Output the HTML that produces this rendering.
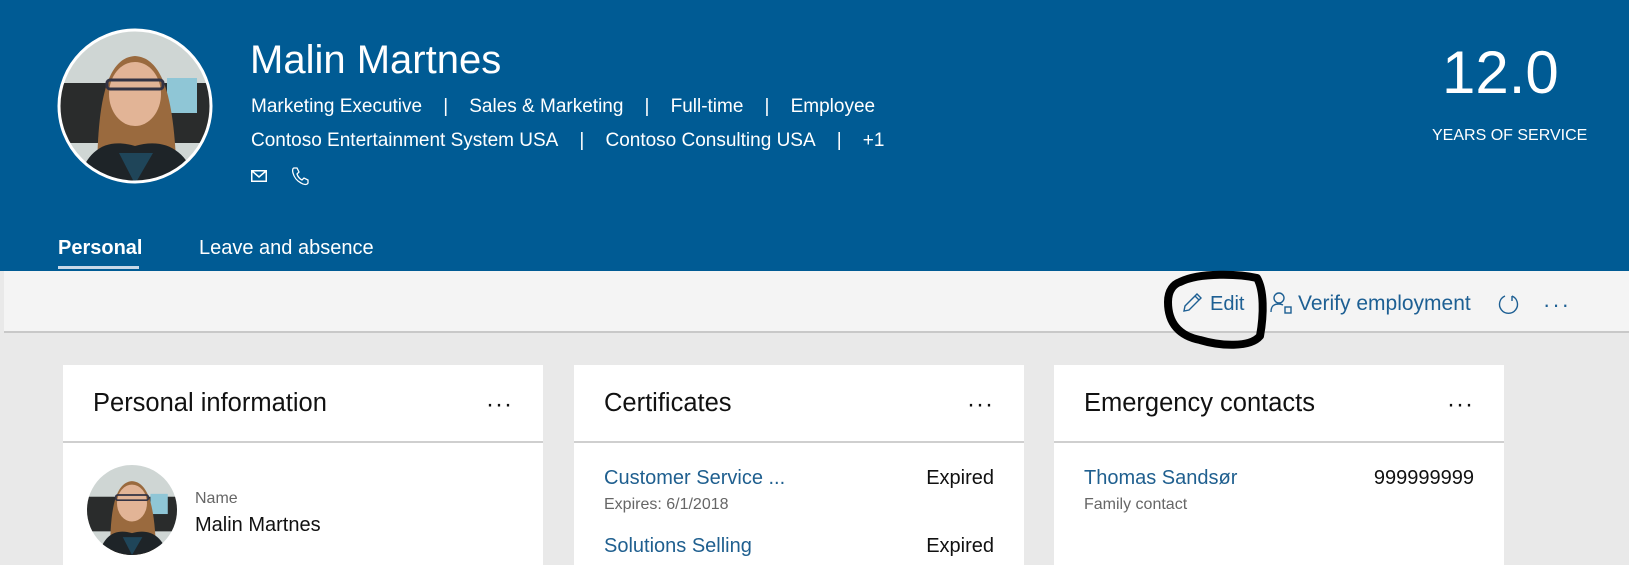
<!DOCTYPE html>
<html><head><meta charset="utf-8"><style>
*{margin:0;padding:0;box-sizing:border-box}
body{width:1629px;height:553px;overflow:hidden;background:#e9e9e9;font-family:"Segoe UI","Liberation Sans",sans-serif;position:relative}
.abs{position:absolute;white-space:nowrap}
.hdr{position:absolute;left:0;top:0;width:1629px;height:271px;background:#005b94;color:#fff}
.tb{position:absolute;left:4px;top:271px;width:1625px;height:62px;background:#f4f4f4;border-bottom:2px solid #c8c8c8}
.card{position:absolute;top:365px;height:200px;background:#fff}
.card .t{position:absolute;left:30px;top:24px;font-size:25.5px;color:#111}
.card .d{position:absolute;right:30px;top:26px;font-size:24px;color:#111;letter-spacing:1px}
.card .ln{position:absolute;left:0;right:0;top:76px;height:2px;background:#cfcfcf}
.lk{color:#1f5f8f;font-size:20px}
.sec{color:#666;font-size:16px}
.blue{color:#1d5f93}
</style></head><body>
<div class="hdr">
  <svg class="abs" style="left:57px;top:28px" width="156" height="156" viewBox="0 0 156 156">
    <defs><clipPath id="c1"><circle cx="78" cy="78" r="75"/></clipPath></defs>
    <g clip-path="url(#c1)">
      <rect width="156" height="156" fill="#cfd6d4"/>
      <rect y="55" width="156" height="60" fill="#2a2c2c"/>
      <rect x="110" y="50" width="30" height="35" fill="#8fc6d6"/>
      <path d="M40 156 C40 90 45 30 78 28 C112 30 118 90 120 156Z" fill="#9a6a3e"/>
      <ellipse cx="78" cy="66" rx="26" ry="32" fill="#e2b496"/>
      <rect x="50" y="52" width="56" height="9" rx="3" fill="none" stroke="#334" stroke-width="3"/>
      <path d="M20 156 C30 120 50 110 78 118 C106 110 130 120 140 156Z" fill="#1e2428"/>
      <path d="M62 125 L78 156 L96 125Z" fill="#1f4559"/>
    </g>
    <circle cx="78" cy="78" r="76" fill="none" stroke="#fff" stroke-width="3"/>
  </svg>
  <div class="abs" style="left:250px;top:36px;font-size:40px;font-weight:300;line-height:48px">Malin Martnes</div>
  <div class="abs" style="left:251px;top:93px;font-size:19px;line-height:28px">Marketing Executive&nbsp;&nbsp;&nbsp;&nbsp;|&nbsp;&nbsp;&nbsp;&nbsp;Sales &amp; Marketing&nbsp;&nbsp;&nbsp;&nbsp;|&nbsp;&nbsp;&nbsp;&nbsp;Full-time&nbsp;&nbsp;&nbsp;&nbsp;|&nbsp;&nbsp;&nbsp;&nbsp;Employee</div>
  <div class="abs" style="left:251px;top:127px;font-size:19px;line-height:28px">Contoso Entertainment System USA&nbsp;&nbsp;&nbsp;&nbsp;|&nbsp;&nbsp;&nbsp;&nbsp;Contoso Consulting USA&nbsp;&nbsp;&nbsp;&nbsp;|&nbsp;&nbsp;&nbsp;&nbsp;+1</div>
  <svg class="abs" style="left:251px;top:170px" width="16" height="12" viewBox="0 0 16 12"><rect x="0.75" y="0.75" width="14.5" height="10.5" fill="none" stroke="#fff" stroke-width="1.5"/><path d="M1 1 L8 7 L15 1" fill="none" stroke="#fff" stroke-width="1.5"/></svg>
  <svg class="abs" style="left:290px;top:166px" width="20" height="20" viewBox="0 0 20 20"><path d="M4 2 L7 2 L9 6 L7 8 C8 11 10 13 12 14 L14 12 L18 14 L18 17 C17 19 14 19 11 17 C7 15 4 11 3 7 C2 4 3 2 4 2Z" fill="none" stroke="#fff" stroke-width="1.3"/></svg>
  <div class="abs" style="left:1442px;top:38px;font-size:60px;font-weight:300;line-height:70px">12.0</div>
  <div class="abs" style="left:1432px;top:126px;font-size:16px;line-height:20px">YEARS OF SERVICE</div>
  <div class="abs" style="left:58px;top:234px;font-size:20px;font-weight:bold;line-height:28px">Personal</div>
  <div class="abs" style="left:58px;top:266px;width:81px;height:3px;background:#c8d8e8"></div>
  <div class="abs" style="left:199px;top:234px;font-size:20px;line-height:28px">Leave and absence</div>
</div>
<div class="tb"></div>
<svg class="abs" style="left:1181px;top:292px" width="22" height="22" viewBox="0 0 22 22"><path d="M3 19 L4 14 L16 2 L20 6 L8 18 Z M14 4 L18 8" fill="none" stroke="#1d5f93" stroke-width="1.4"/></svg>
<div class="abs blue" style="left:1210px;top:290px;font-size:20px;line-height:28px">Edit</div>
<svg class="abs" style="left:1270px;top:291px" width="24" height="24" viewBox="0 0 24 24"><circle cx="9" cy="7" r="5" fill="none" stroke="#1d5f93" stroke-width="1.4"/><path d="M1 21 C1 14 5 13 9 13 C11 13 12 13.5 13 14" fill="none" stroke="#1d5f93" stroke-width="1.4"/><rect x="15" y="16" width="6" height="6" fill="none" stroke="#1d5f93" stroke-width="1.4"/></svg>
<div class="abs blue" style="left:1298px;top:290px;font-size:21px;line-height:28px">Verify employment</div>
<svg class="abs" style="left:1497px;top:293px" width="24" height="24" viewBox="0 0 24 24"><path d="M8 3 A9 9 0 1 0 15 3 M15 3 L15 8" fill="none" stroke="#1d5f93" stroke-width="1.4"/></svg>
<div class="abs" style="left:1543px;top:292px;font-size:22px;color:#1d5f93;letter-spacing:2px">···</div>
<svg class="abs" style="left:1160px;top:268px" width="110" height="84" viewBox="0 0 110 84"><path d="M20 14 C40 4 80 6 97 10 C104 22 104 46 100 68 C90 80 60 78 40 72 C20 68 8 56 8 34 C8 22 14 16 20 14Z" fill="none" stroke="#000" stroke-width="8" stroke-linejoin="round"/></svg>

<div class="card" style="left:63px;width:480px">
  <div class="t">Personal information</div><div class="d">···</div><div class="ln"></div>
  <svg class="abs" style="left:24px;top:100px" width="90" height="90" viewBox="0 0 156 156">
    <defs><clipPath id="c2"><circle cx="78" cy="78" r="78"/></clipPath></defs>
    <g clip-path="url(#c2)">
      <rect width="156" height="156" fill="#cfd6d4"/>
      <rect y="55" width="156" height="60" fill="#2a2c2c"/>
      <rect x="110" y="50" width="30" height="35" fill="#8fc6d6"/>
      <path d="M40 156 C40 90 45 30 78 28 C112 30 118 90 120 156Z" fill="#9a6a3e"/>
      <ellipse cx="78" cy="66" rx="26" ry="32" fill="#e2b496"/>
      <rect x="50" y="52" width="56" height="9" rx="3" fill="none" stroke="#334" stroke-width="3"/>
      <path d="M20 156 C30 120 50 110 78 118 C106 110 130 120 140 156Z" fill="#1e2428"/>
      <path d="M62 125 L78 156 L96 125Z" fill="#1f4559"/>
    </g>
  </svg>
  <div class="abs sec" style="left:132px;top:125px">Name</div>
  <div class="abs" style="left:132px;top:149px;font-size:20px;color:#111">Malin Martnes</div>
</div>
<div class="card" style="left:574px;width:450px">
  <div class="t">Certificates</div><div class="d">···</div><div class="ln"></div>
  <div class="abs lk" style="left:30px;top:102px">Customer Service ...</div>
  <div class="abs" style="right:30px;top:102px;font-size:20px;color:#111">Expired</div>
  <div class="abs sec" style="left:30px;top:131px">Expires: 6/1/2018</div>
  <div class="abs lk" style="left:30px;top:170px">Solutions Selling</div>
  <div class="abs" style="right:30px;top:170px;font-size:20px;color:#111">Expired</div>
</div>
<div class="card" style="left:1054px;width:450px">
  <div class="t">Emergency contacts</div><div class="d">···</div><div class="ln"></div>
  <div class="abs lk" style="left:30px;top:102px">Thomas Sandsør</div>
  <div class="abs" style="right:30px;top:102px;font-size:20px;color:#111">999999999</div>
  <div class="abs sec" style="left:30px;top:131px">Family contact</div>
</div>
</body></html>
